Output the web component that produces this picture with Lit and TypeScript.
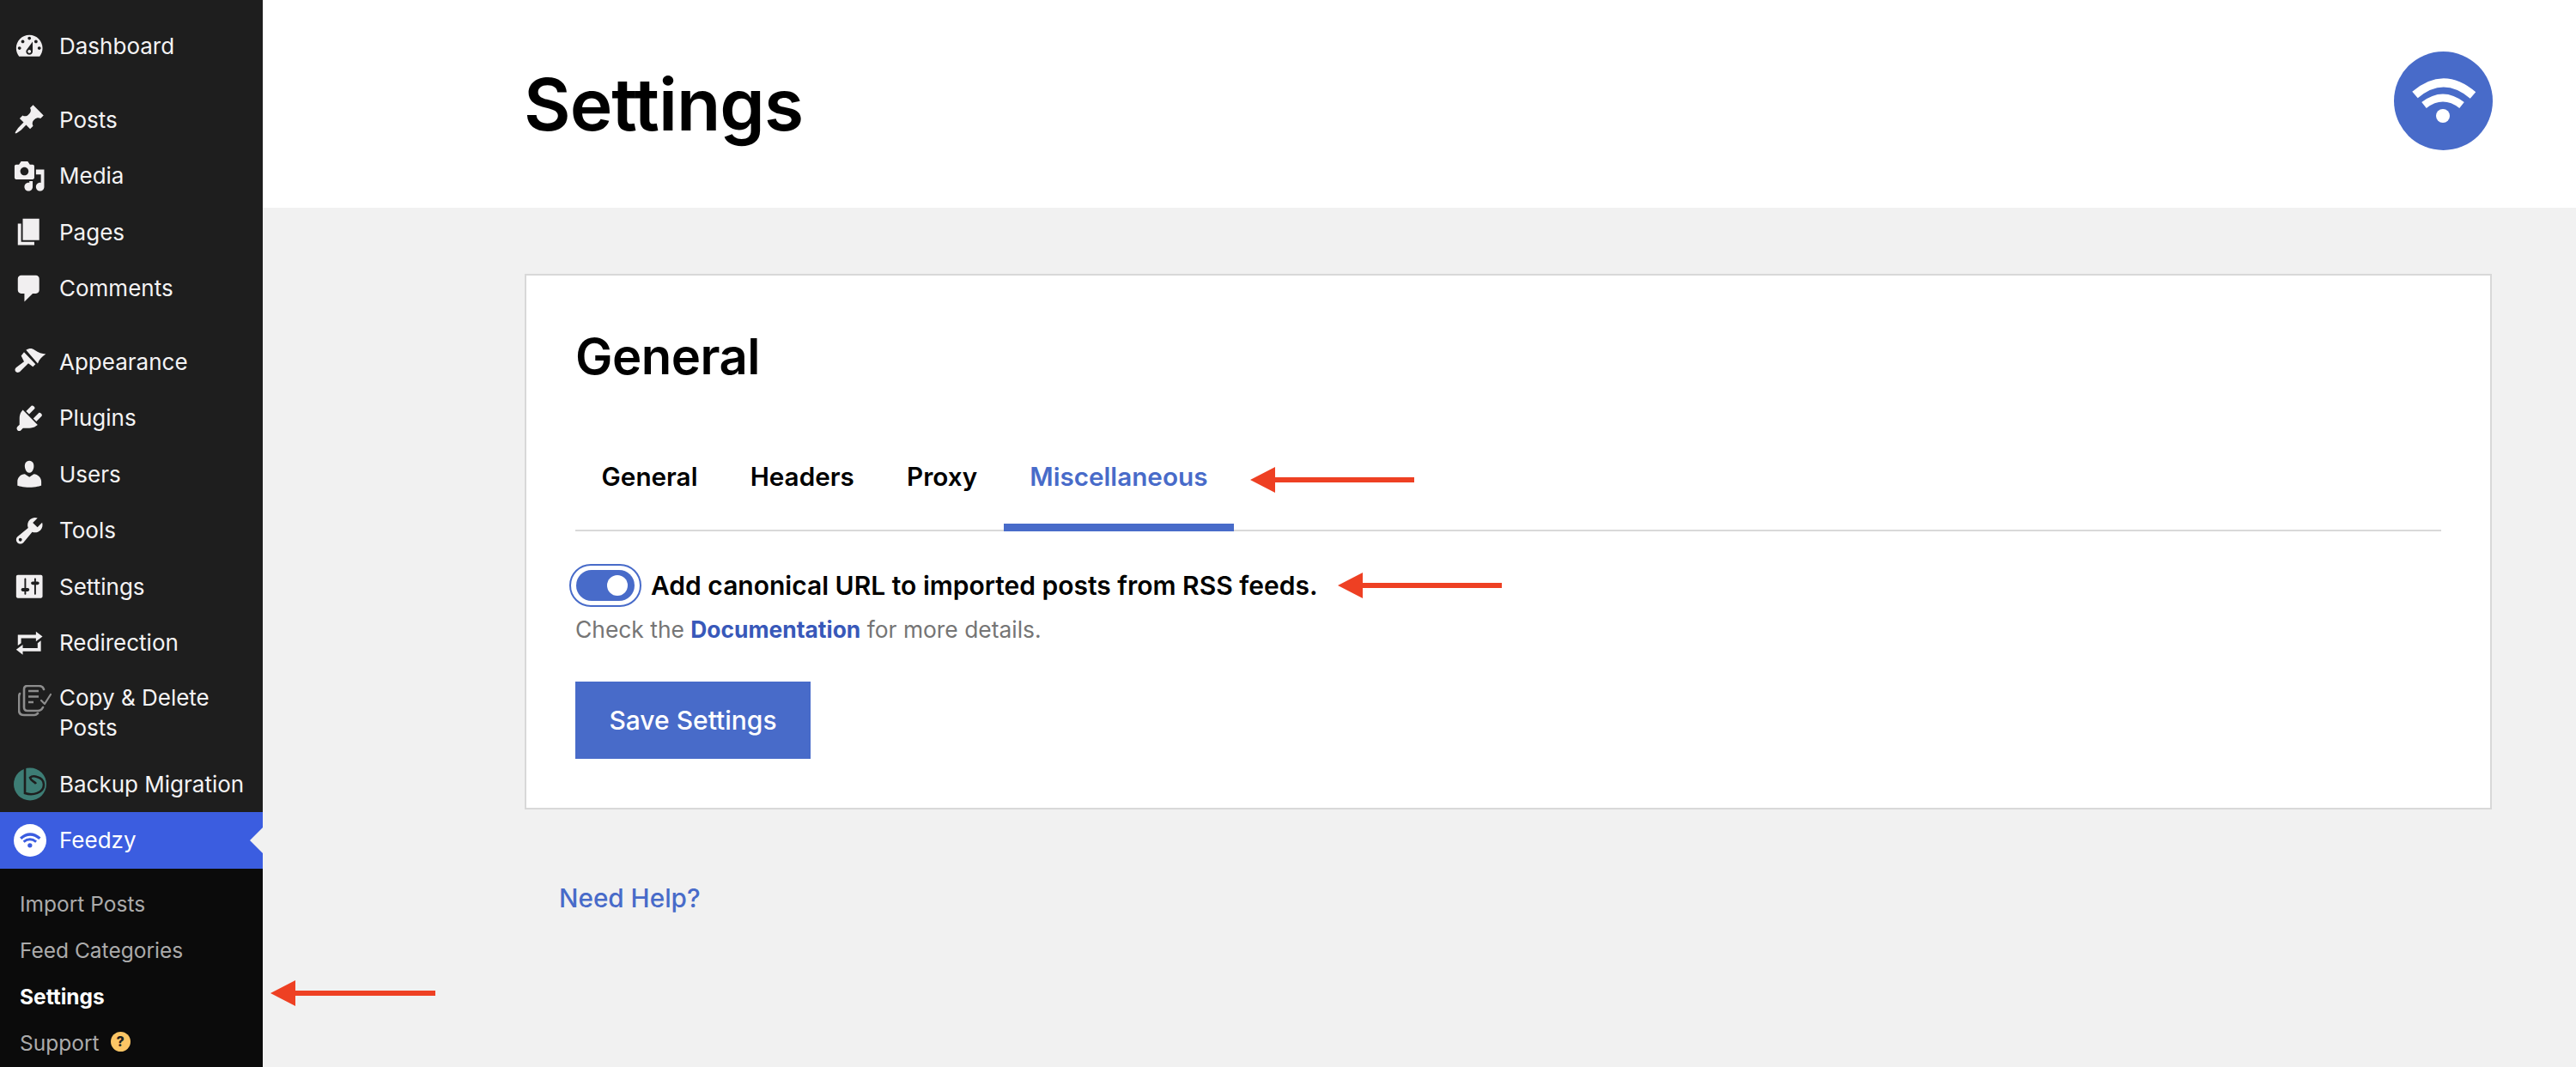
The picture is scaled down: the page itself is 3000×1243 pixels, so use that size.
import { LitElement, html, css, svg } from "lit";
import { customElement } from "lit/decorators.js";

const dash: Record<string, string> = {
  dashboard: "M3.76 16h12.48c1.1-1.37 1.76-3.11 1.76-5 0-4.42-3.58-8-8-8s-8 3.58-8 8c0 1.89.66 3.63 1.76 5zM10 4c.55 0 1 .45 1 1s-.45 1-1 1-1-.45-1-1 .45-1 1-1zM6 6c.55 0 1 .45 1 1s-.45 1-1 1-1-.45-1-1 .45-1 1-1zm8 0c.55 0 1 .45 1 1s-.45 1-1 1-1-.45-1-1 .45-1 1-1zm-5.37 5.55L12 7v6c0 1.1-.9 2-2 2s-2-.9-2-2c0-.57.24-1.08.63-1.45zM4 10c.55 0 1 .45 1 1s-.45 1-1 1-1-.45-1-1 .45-1 1-1zm12 0c.55 0 1 .45 1 1s-.45 1-1 1-1-.45-1-1 .45-1 1-1zm-5 3c0-.55-.45-1-1-1s-1 .45-1 1 .45 1 1 1 1-.45 1-1z",
  post: "M10.44 3.02l1.82-1.82 6.36 6.35-1.83 1.82c-1.05-.68-2.48-.57-3.41.36l-.75.75c-.92.93-1.04 2.35-.35 3.41l-1.83 1.82-2.41-2.41-2.8 2.79c-.42.42-3.38 2.71-3.8 2.29s1.86-3.39 2.28-3.81l2.79-2.79L4.1 9.36l1.83-1.82c1.05.69 2.48.57 3.4-.36l.75-.75c.93-.92 1.05-2.35.36-3.41z",
  media: "M13 11V4c0-.55-.45-1-1-1h-1.67L9 1H5L3.67 3H2c-.55 0-1 .45-1 1v7c0 .55.45 1 1 1h10c.55 0 1-.45 1-1zM7 4.5c1.38 0 2.5 1.12 2.5 2.5S8.38 9.5 7 9.5 4.5 8.38 4.5 7 5.62 4.5 7 4.5zM14 6h5v10.5c0 1.38-1.12 2.5-2.5 2.5S14 17.88 14 16.5s1.12-2.5 2.5-2.5c.17 0 .34.02.5.05V9h-3V6zm-4 8.05V13h2v3.5c0 1.38-1.12 2.5-2.5 2.5S7 17.88 7 16.5 8.12 14 9.5 14c.17 0 .34.02.5.05z",
  page: "M6 15V2h10v13H6zm-1 1h8v2H3V5h2v11z",
  comments: "M5 2h9c1.1 0 2 .9 2 2v7c0 1.1-.9 2-2 2h-2l-5 5v-5H5c-1.1 0-2-.9-2-2V4c0-1.1.9-2 2-2z",
  plugins: "M13.11 4.36L9.87 7.6 8 5.73l3.24-3.24c.35-.34 1.05-.2 1.56.32.52.51.66 1.21.31 1.55zm-8 1.77l.91-1.12 9.01 9.01-1.19.84c-.71.71-2.63 1.16-3.82 1.16H6.14L4.9 17.26c-.59.59-1.54.59-2.12 0-.59-.58-.59-1.53 0-2.12l1.24-1.24v-3.88c0-1.13.4-3.19 1.09-3.89zm7.26 3.97l3.24-3.24c.34-.35 1.04-.21 1.55.31.52.51.66 1.21.31 1.55l-3.24 3.25z",
  users: "M10 9.25c-2.27 0-2.73-3.44-2.73-3.44C7 4.02 7.82 2 9.97 2c2.16 0 2.98 2.02 2.71 3.81 0 0-.41 3.44-2.68 3.44zm0 2.57L12.72 10c2.39 0 4.52 2.33 4.52 4.53v2.49s-3.65 1.13-7.24 1.13c-3.65 0-7.24-1.13-7.24-1.13v-2.49c0-2.25 1.94-4.48 4.47-4.48z",
  tools: "M16.68 9.77c-1.34 1.34-3.3 1.67-4.95.99l-5.41 6.52c-.99.99-2.59.99-3.58 0s-.99-2.59 0-3.57l6.52-5.42c-.68-1.65-.35-3.61.99-4.95 1.28-1.28 3.12-1.62 4.72-1.06l-2.89 2.89 2.82 2.82 2.86-2.87c.53 1.58.18 3.39-1.08 4.65zM3.81 16.21c.4.39 1.04.39 1.43 0 .4-.4.4-1.04 0-1.43-.39-.4-1.03-.4-1.43 0-.39.39-.39 1.03 0 1.43z",
  settings: "M18 16V4c0-.55-.45-1-1-1H3c-.55 0-1 .45-1 1v12c0 .55.45 1 1 1h14c.55 0 1-.45 1-1zM8 11h1c.55 0 1 .45 1 1s-.45 1-1 1H8v1.5c0 .28-.22.5-.5.5s-.5-.22-.5-.5V13H6c-.55 0-1-.45-1-1s.45-1 1-1h1V5.5c0-.28.22-.5.5-.5s.5.22.5.5V11zm5-2h-1c-.55 0-1-.45-1-1s.45-1 1-1h1V5.5c0-.28.22-.5.5-.5s.5.22.5.5V7h1c.55 0 1 .45 1 1s-.45 1-1 1h-1v5.5c0 .28-.22.5-.5.5s-.5-.22-.5-.5V9z",
  redirect: "M5 7v3l-2 1.5V5h11V3l4 3.01L14 9V7H5zm10 6v-3l2-1.5V15H6v2l-4-3.01L6 11v2h9z",
};

const dashIcon = (k: string) => html`<svg class="ic" viewBox="0 0 20 20"><path fill-rule="evenodd" d=${dash[k]}></path></svg>`;

const brushIcon = html`<svg class="ic" viewBox="16 8.4 115.2 115.2">
  <path d="M62 26C72 20 82 18 92 26C105 35 118 40 131 40C118 48 108 58 103 73Z"></path>
  <path d="M55 33L95 75L86 84L70 72L42 100C36 107 26 105 24 98C22 92 26 88 30 85L55 66L45 46Z"></path>
</svg>`;

const copyIcon = html`<svg class="copy" viewBox="0 0 39 38" fill="none" stroke="#8d8d8d" stroke-width="2.6" stroke-linecap="round" stroke-linejoin="round">
  <path d="M30 5C29 2 27 1 24 1H11C8 1 7 3 7 5V26C7 28 8 30 11 30H23C26 30 28 28 29 26"></path>
  <path d="M2 10C1 12 1 13 1 14V29C1 33 3 35 7 35H19C21 35 22 34 23 33"></path>
  <path d="M12 7H24M12 13.5H24M12 20H18" stroke-linecap="butt"></path>
  <path d="M27 18L31 22L38 11" stroke-width="2.2"></path>
</svg>`;

const backupIcon = html`<svg class="ic logo" viewBox="0 0 38 39">
  <circle cx="19" cy="19.5" r="19" fill="#3d7d75"></circle>
  <path d="M13 1V30C22 33 35 30 35 20C35 15 31 12 27 11C24 10 21 10 19 12C20 16 24 16 26 19" fill="none" stroke="#1e1e1e" stroke-width="2.6"></path>
</svg>`;

const wifiIcon = (bg: string, fg: string, cls: string) => html`<svg class=${cls} viewBox="0 0 115 115">
  <circle cx="57.5" cy="57.5" r="57.5" fill=${bg}></circle>
  ${svg`<path d="M24.5 50.5Q58 22 92 51" fill="none" stroke=${fg} stroke-width="10"></path>
  <path d="M35 62.5Q57 45.5 79 62.5" fill="none" stroke=${fg} stroke-width="9"></path>
  <circle cx="57" cy="75" r="8" fill=${fg}></circle>`}
</svg>`;

@customElement("app-root")
export class AppRoot extends LitElement {
  static styles = css`
    :host { display: block; font-family: Inter, "Liberation Sans", sans-serif; }
    * { box-sizing: border-box; }
    .page { display: flex; height: 1243px; background: #f1f1f1; overflow: hidden; position: relative; }
    .side { width: 306px; flex: none; background: #1e1e1e; color: #f4f3f4; font-size: 26px; display: flex; flex-direction: column; padding-top: 21px; }
    .item { display: flex; align-items: center; height: 65.5px; position: relative; }
    .item .slot { width: 69px; flex: none; display: flex; justify-content: center; }
    .ic { width: 38.4px; height: 38.4px; fill: #f1eff0; flex: none; }
    .ic.logo { width: 38px; height: 39px; }
    .copy { width: 39px; height: 38px; flex: none; margin: 3px 0 0 12px; }
    .fz { width: 38px; height: 38px; display: block; }
    .gap { margin-top: 20px; }
    .two { height: 99px; align-items: flex-start; padding-top: 13px; line-height: 35px; }
    .cur { background: #3b5de0; color: #fff; height: 66px; padding-bottom: 1px; }
    .cur::after { content: ""; position: absolute; right: 0; top: 18px; border: 15.5px solid transparent; border-right-color: #f1f1f1; border-left-width: 0; }
    .sub { flex: 1; background: #0b0b0b; padding-top: 14px; font-size: 24.5px; color: #ababab; }
    .sub div { height: 54px; padding-left: 23px; display: flex; align-items: center; gap: 13px; }
    .sub .on { color: #fff; font-weight: 700; }
    .sub .q { width: 23px; height: 23px; border-radius: 50%; background: #fbc565; color: #1e1e1e; font-size: 16px; font-weight: 800; display: flex; align-items: center; justify-content: center; margin-top: -4px; padding: 0; }
    main { flex: 1; display: flex; flex-direction: column; min-width: 0; }
    .head { height: 242px; background: #fff; display: flex; align-items: center; justify-content: space-between; padding: 0 97px 0 304px; }
    h1 { margin: 0; font-size: 84px; font-weight: 600; color: #000; letter-spacing: -1px; }
    .logo-big { width: 115px; height: 115px; display: block; margin-top: -8px; }
    .card { margin: 77px 98px 0 305px; height: 624px; background: #fff; border: 2px solid #d8d8d8; padding: 59px 57px 0; }
    h2 { margin: 0; font-size: 58px; line-height: 70px; font-weight: 600; color: #000; letter-spacing: -.5px; }
    .tabs { display: flex; margin-top: 59px; border-bottom: 2px solid #d9d9d9; height: 110px; }
    .tab { padding: 28px 30.6px 0; font-size: 29.7px; font-weight: 600; color: #000; display: flex; align-items: flex-start; border-bottom: 9px solid transparent; margin-bottom: -2px; }
    .tab.on { color: #486bc9; border-bottom-color: #486bc9; }
    .row { display: flex; align-items: center; gap: 12px; margin: 38px 0 0 -7px; }
    .tog { width: 84px; height: 50px; border-radius: 25px; border: 2px solid #486bc9; padding: 5px 6px; background: #fff; flex: none; }
    .track { height: 36px; border-radius: 18px; background: #486bc9; display: flex; justify-content: flex-end; align-items: center; padding-right: 8px; }
    .knob { width: 24px; height: 24px; border-radius: 50%; background: #fff; }
    .lab { font-size: 30px; font-weight: 600; color: #000; margin-left: -1px; }
    .help { font-size: 26.4px; color: #757575; margin-top: 10px; }
    .help b { color: #3858b9; font-weight: 700; }
    .btn { margin-top: 45px; width: 274px; height: 90px; background: #486bc9; color: #fff; font-size: 30px; font-weight: 500; display: flex; align-items: center; justify-content: center; }
    .need { margin: 85px 0 0 345px; font-size: 29.7px; font-weight: 500; color: #486bc9; }
    .arrow { position: absolute; display: block; }
  `;

  private arrow(x: number, y: number, w: number) {
    return html`<svg class="arrow" style="left:${x}px;top:${y - 15}px" width=${w} height="30" viewBox="0 0 ${w} 30"><path fill="#ee4023" d="M0 15L29 0V12H${w}V18H29V30Z"></path></svg>`;
  }

  render() {
    const row = (k: string, t: string, cls = "") => html`<div class="item ${cls}"><span class="slot">${dashIcon(k)}</span>${t}</div>`;
    return html`<div class="page">
      <nav class="side">
        ${row("dashboard", "Dashboard")}
        ${row("post", "Posts", "gap")}
        ${row("media", "Media")}
        ${row("page", "Pages")}
        ${row("comments", "Comments")}
        <div class="item gap"><span class="slot">${brushIcon}</span>Appearance</div>
        ${row("plugins", "Plugins")}
        ${row("users", "Users")}
        ${row("tools", "Tools")}
        ${row("settings", "Settings")}
        ${row("redirect", "Redirection")}
        <div class="item two"><span class="slot">${copyIcon}</span><span>Copy &amp; Delete<br />Posts</span></div>
        <div class="item"><span class="slot">${backupIcon}</span>Backup Migration</div>
        <div class="item cur"><span class="slot">${wifiIcon("#fff", "#3b5de0", "fz")}</span>Feedzy</div>
        <div class="sub">
          <div>Import Posts</div>
          <div>Feed Categories</div>
          <div class="on">Settings</div>
          <div>Support <span class="q">?</span></div>
        </div>
      </nav>
      <main>
        <header class="head"><h1>Settings</h1>${wifiIcon("#486bc9", "#fff", "logo-big")}</header>
        <section class="card">
          <h2>General</h2>
          <div class="tabs">
            <div class="tab">General</div><div class="tab">Headers</div><div class="tab">Proxy</div><div class="tab on">Miscellaneous</div>
          </div>
          <div class="row"><div class="tog"><div class="track"><div class="knob"></div></div></div><div class="lab">Add canonical URL to imported posts from RSS feeds.</div></div>
          <div class="help">Check the <b>Documentation</b> for more details.</div>
          <div class="btn">Save Settings</div>
        </section>
        <div class="need">Need Help?</div>
      </main>
      ${this.arrow(1456, 559, 191)}
      ${this.arrow(1558, 682, 191)}
      ${this.arrow(315, 1157, 192)}
    </div>`;
  }
}
